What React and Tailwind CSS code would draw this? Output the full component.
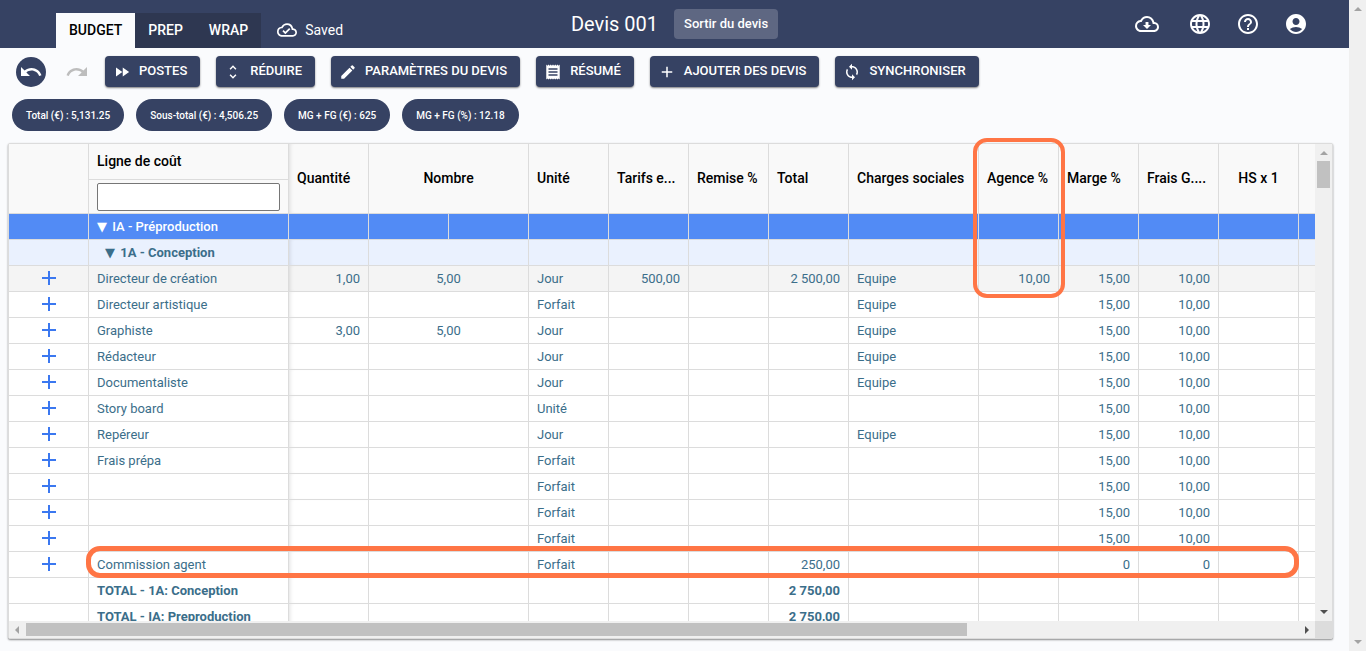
// src/pages/Budget/BudgetPage.jsx
import {
  MdAccountCircle,
  MdAdd,
  MdEdit,
  MdFastForward,
  MdHelpOutline,
  MdLanguage,
  MdOutlineCloudDone,
  MdOutlineCloudDownload,
  MdReceipt,
  MdSync,
  MdUnfoldMore,
} from 'react-icons/md';

const actions = [
  { label: 'POSTES', Icon: MdFastForward },
  { label: 'RÉDUIRE', Icon: MdUnfoldMore },
  { label: 'PARAMÈTRES DU DEVIS', Icon: MdEdit },
  { label: 'RÉSUMÉ', Icon: MdReceipt },
  { label: 'AJOUTER DES DEVIS', Icon: MdAdd },
  { label: 'SYNCHRONISER', Icon: MdSync },
];

const chips = [
  'Total (€) : 5,131.25',
  'Sous-total (€) : 4,506.25',
  'MG + FG (€) : 625',
  'MG + FG (%) : 12.18',
];

const lines = [
  { nom: 'Directeur de création', quantite: '1,00', nombre: '5,00', unite: 'Jour', tarif: '500,00', total: '2 500,00', charges: 'Equipe', agence: '10,00', marge: '15,00', frais: '10,00', active: true },
  { nom: 'Directeur artistique', unite: 'Forfait', charges: 'Equipe', marge: '15,00', frais: '10,00' },
  { nom: 'Graphiste', quantite: '3,00', nombre: '5,00', unite: 'Jour', charges: 'Equipe', marge: '15,00', frais: '10,00' },
  { nom: 'Rédacteur', unite: 'Jour', charges: 'Equipe', marge: '15,00', frais: '10,00' },
  { nom: 'Documentaliste', unite: 'Jour', charges: 'Equipe', marge: '15,00', frais: '10,00' },
  { nom: 'Story board', unite: 'Unité', marge: '15,00', frais: '10,00' },
  { nom: 'Repéreur', unite: 'Jour', charges: 'Equipe', marge: '15,00', frais: '10,00' },
  { nom: 'Frais prépa', unite: 'Forfait', marge: '15,00', frais: '10,00' },
  { nom: '', unite: 'Forfait', marge: '15,00', frais: '10,00' },
  { nom: '', unite: 'Forfait', marge: '15,00', frais: '10,00' },
  { nom: '', unite: 'Forfait', marge: '15,00', frais: '10,00' },
  { nom: 'Commission agent', unite: 'Forfait', total: '250,00', marge: '0', frais: '0' },
];

const totals = [
  { nom: 'TOTAL - 1A: Conception', total: '2 750,00' },
  { nom: 'TOTAL - IA: Preproduction', total: '2 750,00' },
];

const Arrow = ({ dir, className = '' }) => {
  const points = {
    up: '0,6 4,2 8,6',
    down: '0,2 4,6 8,2',
    left: '6,0 2,4 6,8',
    right: '2,0 6,4 2,8',
  };
  return (
    <svg viewBox="0 0 8 8" className={`w-2 h-2 shrink-0 fill-current ${className}`}>
      <polygon points={points[dir]} />
    </svg>
  );
};

const Header = () => (
  <header className="h-12 shrink-0 bg-[#364263] text-white grid grid-cols-[1fr_auto_1fr]">
    <div className="flex items-end pl-14">
      <nav className="flex text-sm font-medium bg-[#2e3751]">
        <a href="#budget" className="h-[35px] px-[13px] pb-0.5 flex items-center bg-[#fafbfd] text-black">BUDGET</a>
        <a href="#prep" className="h-[35px] px-[13px] pb-0.5 flex items-center">PREP</a>
        <a href="#wrap" className="h-[35px] px-[13px] pb-0.5 flex items-center">WRAP</a>
      </nav>
      <div className="h-[35px] ml-4 pb-0.5 flex items-center gap-2 text-sm">
        <MdOutlineCloudDone className="w-5 h-5" />
        Saved
      </div>
    </div>
    <div className="flex items-center gap-4">
      <h1 className="text-xl">Devis 001</h1>
      <button className="h-[30px] px-[10px] rounded bg-[#5e6782] text-[13px] font-medium">Sortir du devis</button>
    </div>
    <div className="flex items-center justify-end gap-6 pr-[41px]">
      <button aria-label="Télécharger" className="mr-[5px]"><MdOutlineCloudDownload className="w-6 h-6" /></button>
      <button aria-label="Langue"><MdLanguage className="w-6 h-6" /></button>
      <button aria-label="Aide"><MdHelpOutline className="w-6 h-6" /></button>
      <button aria-label="Compte"><MdAccountCircle className="w-6 h-6" /></button>
    </div>
  </header>
);

const Toolbar = () => (
  <div className="flex items-center gap-4 px-4 pt-2">
    <button aria-label="Annuler" className="w-[30px] h-[30px] rounded-full bg-[#364263] text-white flex items-center justify-center">
      <svg viewBox="0 0 24 24" className="w-6 h-6 fill-current">
        <path d="M12.5 8c-2.65 0-5.05.99-6.9 2.6L2 7v9h9l-3.62-3.62c1.39-1.16 3.16-1.88 5.12-1.88 3.54 0 6.55 2.31 7.6 5.5l2.37-.78C21.08 11.03 17.15 8 12.5 8z" />
      </svg>
    </button>
    <button aria-label="Rétablir" className="w-[27px] h-[30px] text-[#bdbdbd] flex items-center justify-end">
      <svg viewBox="0 0 24 24" className="w-6 h-6 fill-current">
        <path d="M18.4 10.6C16.55 8.99 14.15 8 11.5 8c-4.65 0-8.58 3.03-9.96 7.22L3.9 16c1.05-3.19 4.05-5.5 7.6-5.5 1.95 0 3.73.72 5.12 1.88L13 16h9V7l-3.6 3.6z" />
      </svg>
    </button>
    {actions.map(({ label, Icon }) => (
      <button
        key={label}
        className="h-[31px] pl-2 pr-[13px] rounded bg-[#364263] text-white text-[13px] font-medium flex items-center gap-2 whitespace-nowrap shadow-[0_1px_2px_rgba(0,0,0,0.5)]"
      >
        <Icon className="w-[18px] h-[18px]" />
        <span className="pb-px">{label}</span>
      </button>
    ))}
  </div>
);

const Chips = () => (
  <div className="flex gap-3 px-3 py-3">
    {chips.map((chip) => (
      <span key={chip} className="h-8 px-[14px] rounded-full bg-[#364263] text-white text-[10px] font-medium flex items-center whitespace-nowrap">
        {chip}
      </span>
    ))}
  </div>
);

const Th = ({ children, align = 'text-left', className = '', ...props }) => (
  <th rowSpan={2} className={`px-2 pb-0.5 border-r border-b border-[#dcdcdc] bg-[#f9f9f9] text-sm font-medium text-black whitespace-nowrap ${align} ${className}`} {...props}>
    {children}
  </th>
);

const Td = ({ children, className = '', ...props }) => (
  <td className={`h-[26px] px-2 border-r border-b border-[#dcdcdc] whitespace-nowrap ${className}`} {...props}>
    {children}
  </td>
);

const pinnedEdge = 'shadow-[inset_4px_0_4px_-3px_rgba(0,0,0,0.12)]';

const EmptyCells = ({ count }) => Array.from({ length: count }, (_, i) => <Td key={i} />);

const LineRow = ({ line }) => (
  <tr className={line.active ? 'bg-[#f4f4f4]' : 'bg-white'}>
    <Td className="leading-none pb-px">
      <button aria-label="Ajouter une ligne" className="block mx-auto text-[#3b78f0]">
        <MdAdd className="w-6 h-6" />
      </button>
    </Td>
    <Td>{line.nom}</Td>
    <Td className={`text-right ${pinnedEdge}`}>{line.quantite}</Td>
    <Td colSpan={2} className="text-center">{line.nombre}</Td>
    <Td>{line.unite}</Td>
    <Td className="text-right">{line.tarif}</Td>
    <Td />
    <Td className="text-right">{line.total}</Td>
    <Td>{line.charges}</Td>
    <Td className="text-right">{line.agence}</Td>
    <Td className="text-right">{line.marge}</Td>
    <Td className="text-right">{line.frais}</Td>
    <EmptyCells count={2} />
  </tr>
);

const BudgetTable = () => (
  <table className="table-fixed w-[1370px] border-separate border-spacing-0 text-[13px] leading-5 text-[#3b6e8a]">
    <colgroup>
      <col className="w-20" />
      <col className="w-[200px]" />
      <col className="w-20" />
      <col className="w-20" />
      <col className="w-20" />
      <col className="w-20" />
      <col className="w-20" />
      <col className="w-20" />
      <col className="w-20" />
      <col className="w-[130px]" />
      <col className="w-20" />
      <col className="w-20" />
      <col className="w-20" />
      <col className="w-20" />
      <col className="w-20" />
    </colgroup>
    <thead>
      <tr className="h-9">
        <Th />
        <Th rowSpan={1}>Ligne de coût</Th>
        <Th className={pinnedEdge}>Quantité</Th>
        <Th colSpan={2} align="text-center">Nombre</Th>
        <Th>Unité</Th>
        <Th>Tarifs e...</Th>
        <Th>Remise %</Th>
        <Th>Total</Th>
        <Th>Charges sociales</Th>
        <Th>Agence %</Th>
        <Th>Marge %</Th>
        <Th>Frais G....</Th>
        <Th align="text-center">HS x 1</Th>
        <Th />
      </tr>
      <tr className="h-[34px]">
        <th className="px-2 border-r border-b border-[#dcdcdc] bg-[#f9f9f9]">
          <input aria-label="Ligne de coût" type="text" className="block w-full h-7 px-1 bg-white border border-[#767676] rounded-xs font-normal text-black" />
        </th>
      </tr>
    </thead>
    <tbody>
      <tr className="bg-[#528bf5] text-white font-medium">
        <Td />
        <Td><span className="mr-0.5 font-['DejaVu_Sans']">▼</span> IA - Préproduction</Td>
        <EmptyCells count={13} />
      </tr>
      <tr className="bg-[#eaf1fe] font-bold">
        <Td />
        <Td className="pl-4"><span className="mr-0.5 font-['DejaVu_Sans'] font-normal">▼</span> 1A - Conception</Td>
        <Td className={pinnedEdge} />
        <Td colSpan={2} />
        <EmptyCells count={10} />
      </tr>
      {lines.map((line, i) => (
        <LineRow key={i} line={line} />
      ))}
      {totals.map((row) => (
        <tr key={row.nom} className="bg-white font-bold">
          <Td />
          <Td>{row.nom}</Td>
          <Td className={pinnedEdge} />
          <Td colSpan={2} />
          <EmptyCells count={3} />
          <Td className="text-right">{row.total}</Td>
          <EmptyCells count={6} />
        </tr>
      ))}
    </tbody>
  </table>
);

const Grid = () => (
  <div className="relative flex-1 min-h-0 ml-2 mr-4 mb-3">
    <div className="h-full border border-[#dcdcdc] rounded-xs bg-white grid grid-cols-[minmax(0,1fr)_17px] grid-rows-[minmax(0,1fr)_17px] shadow-[0_1px_2px_rgba(0,0,0,0.45)]">
      <div className="overflow-hidden">
        <BudgetTable />
      </div>
      <div className="bg-[#f0f0f0] flex flex-col items-center justify-between py-[5px]">
        <div className="flex flex-col items-center gap-1">
          <Arrow dir="up" className="text-[#a3a3a3]" />
          <div className="w-[13px] h-[27px] bg-[#c1c1c1]" />
        </div>
        <Arrow dir="down" className="text-[#505050]" />
      </div>
      <div className="bg-[#f0f0f0] flex items-center px-1 gap-[5px]">
        <Arrow dir="left" className="text-[#a3a3a3]" />
        <div className="flex-1">
          <div className="w-[74%] h-[13px] bg-[#c1c1c1]" />
        </div>
        <Arrow dir="right" className="text-[#505050]" />
      </div>
      <div className="bg-[#dcdcdc]" />
    </div>
    {/* highlights over the agency column and the commission line */}
    <div className="absolute left-[965px] -top-[5px] w-[92px] h-40 border-4 border-[#ff7545] rounded-[14px] pointer-events-none" />
    <div className="absolute left-[78px] top-[403px] w-[1213px] h-8 border-[5px] border-[#ff7545] rounded-[14px] pointer-events-none" />
  </div>
);

export default function App() {
  return (
    <div className="h-screen flex bg-[#fafbfd] font-[Roboto,sans-serif]">
      <main className="flex-1 min-w-0 flex flex-col">
        <Header />
        <Toolbar />
        <Chips />
        <Grid />
      </main>
      <div className="w-[17px] shrink-0 bg-[#f0f0f0] flex flex-col items-center justify-between py-[5px] text-[#a3a3a3]">
        <Arrow dir="up" />
        <Arrow dir="down" />
      </div>
    </div>
  );
}
